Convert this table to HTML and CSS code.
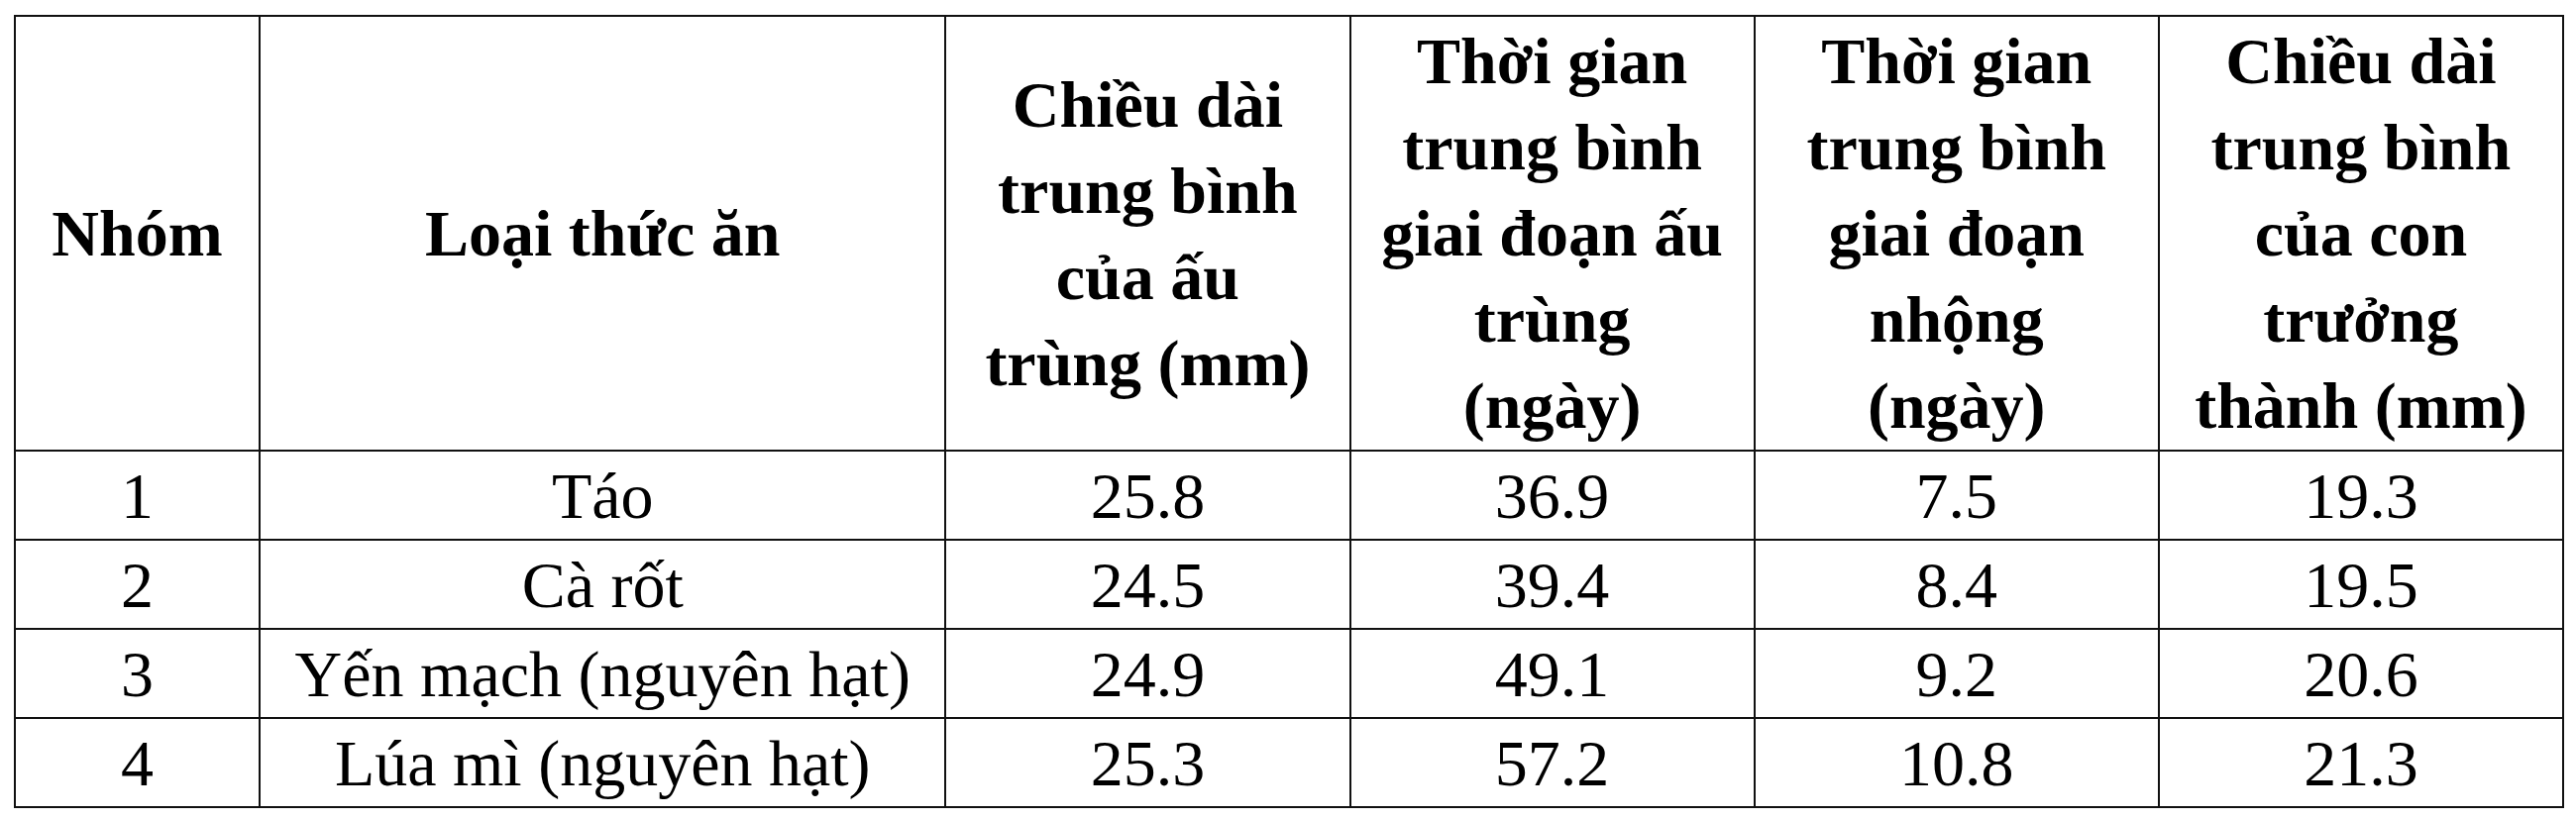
FILE: index.html
```html
<!DOCTYPE html>
<html lang="vi">
<head>
    <meta charset="UTF-8">
    <meta name="viewport" content="width=device-width, initial-scale=1.0">
    <title>Bảng thức ăn và sự phát triển</title>
    <link rel="stylesheet" href="styles.css">
</head>
<body>
    <div class="page">
        <table class="data-table">
            <colgroup>
                <col class="col-group">
                <col class="col-food">
                <col class="col-num">
                <col class="col-num">
                <col class="col-num">
                <col class="col-num">
            </colgroup>
            <thead>
                <tr>
                    <th>Nhóm</th>
                    <th>Loại thức ăn</th>
                    <th>Chiều dài<br>trung bình<br>của ấu<br>trùng (mm)</th>
                    <th>Thời gian<br>trung bình<br>giai đoạn ấu<br>trùng<br>(ngày)</th>
                    <th>Thời gian<br>trung bình<br>giai đoạn<br>nhộng<br>(ngày)</th>
                    <th>Chiều dài<br>trung bình<br>của con<br>trưởng<br>thành (mm)</th>
                </tr>
            </thead>
            <tbody>
                <tr>
                    <td>1</td>
                    <td>Táo</td>
                    <td>25.8</td>
                    <td>36.9</td>
                    <td>7.5</td>
                    <td>19.3</td>
                </tr>
                <tr>
                    <td>2</td>
                    <td>Cà rốt</td>
                    <td>24.5</td>
                    <td>39.4</td>
                    <td>8.4</td>
                    <td>19.5</td>
                </tr>
                <tr>
                    <td>3</td>
                    <td>Yến mạch (nguyên hạt)</td>
                    <td>24.9</td>
                    <td>49.1</td>
                    <td>9.2</td>
                    <td>20.6</td>
                </tr>
                <tr>
                    <td>4</td>
                    <td>Lúa mì (nguyên hạt)</td>
                    <td>25.3</td>
                    <td>57.2</td>
                    <td>10.8</td>
                    <td>21.3</td>
                </tr>
            </tbody>
        </table>
    </div>
</body>
</html>
```

FILE: styles.css
```css
body {
    margin: 0;
    background-color: #fff;
    font-family: "Liberation Serif", "Times New Roman", serif;
    color: #000;
}
.page {
    padding: 15px 0 0 14px;
}
.data-table {
    border-collapse: collapse;
    table-layout: fixed;
    width: 2574px;
}
.col-group {
    width: 247px;
}
.col-food {
    width: 692px;
}
.col-num {
    width: 408px;
}
.data-table th,
.data-table td {
    border: 2px solid #111;
    text-align: center;
    vertical-align: middle;
    padding: 0 4px;
    font-size: 66px;
    line-height: 87px;
}
.data-table th {
    height: 437px;
    font-weight: bold;
}
.data-table td {
    height: 88px;
    font-weight: normal;
}
```
